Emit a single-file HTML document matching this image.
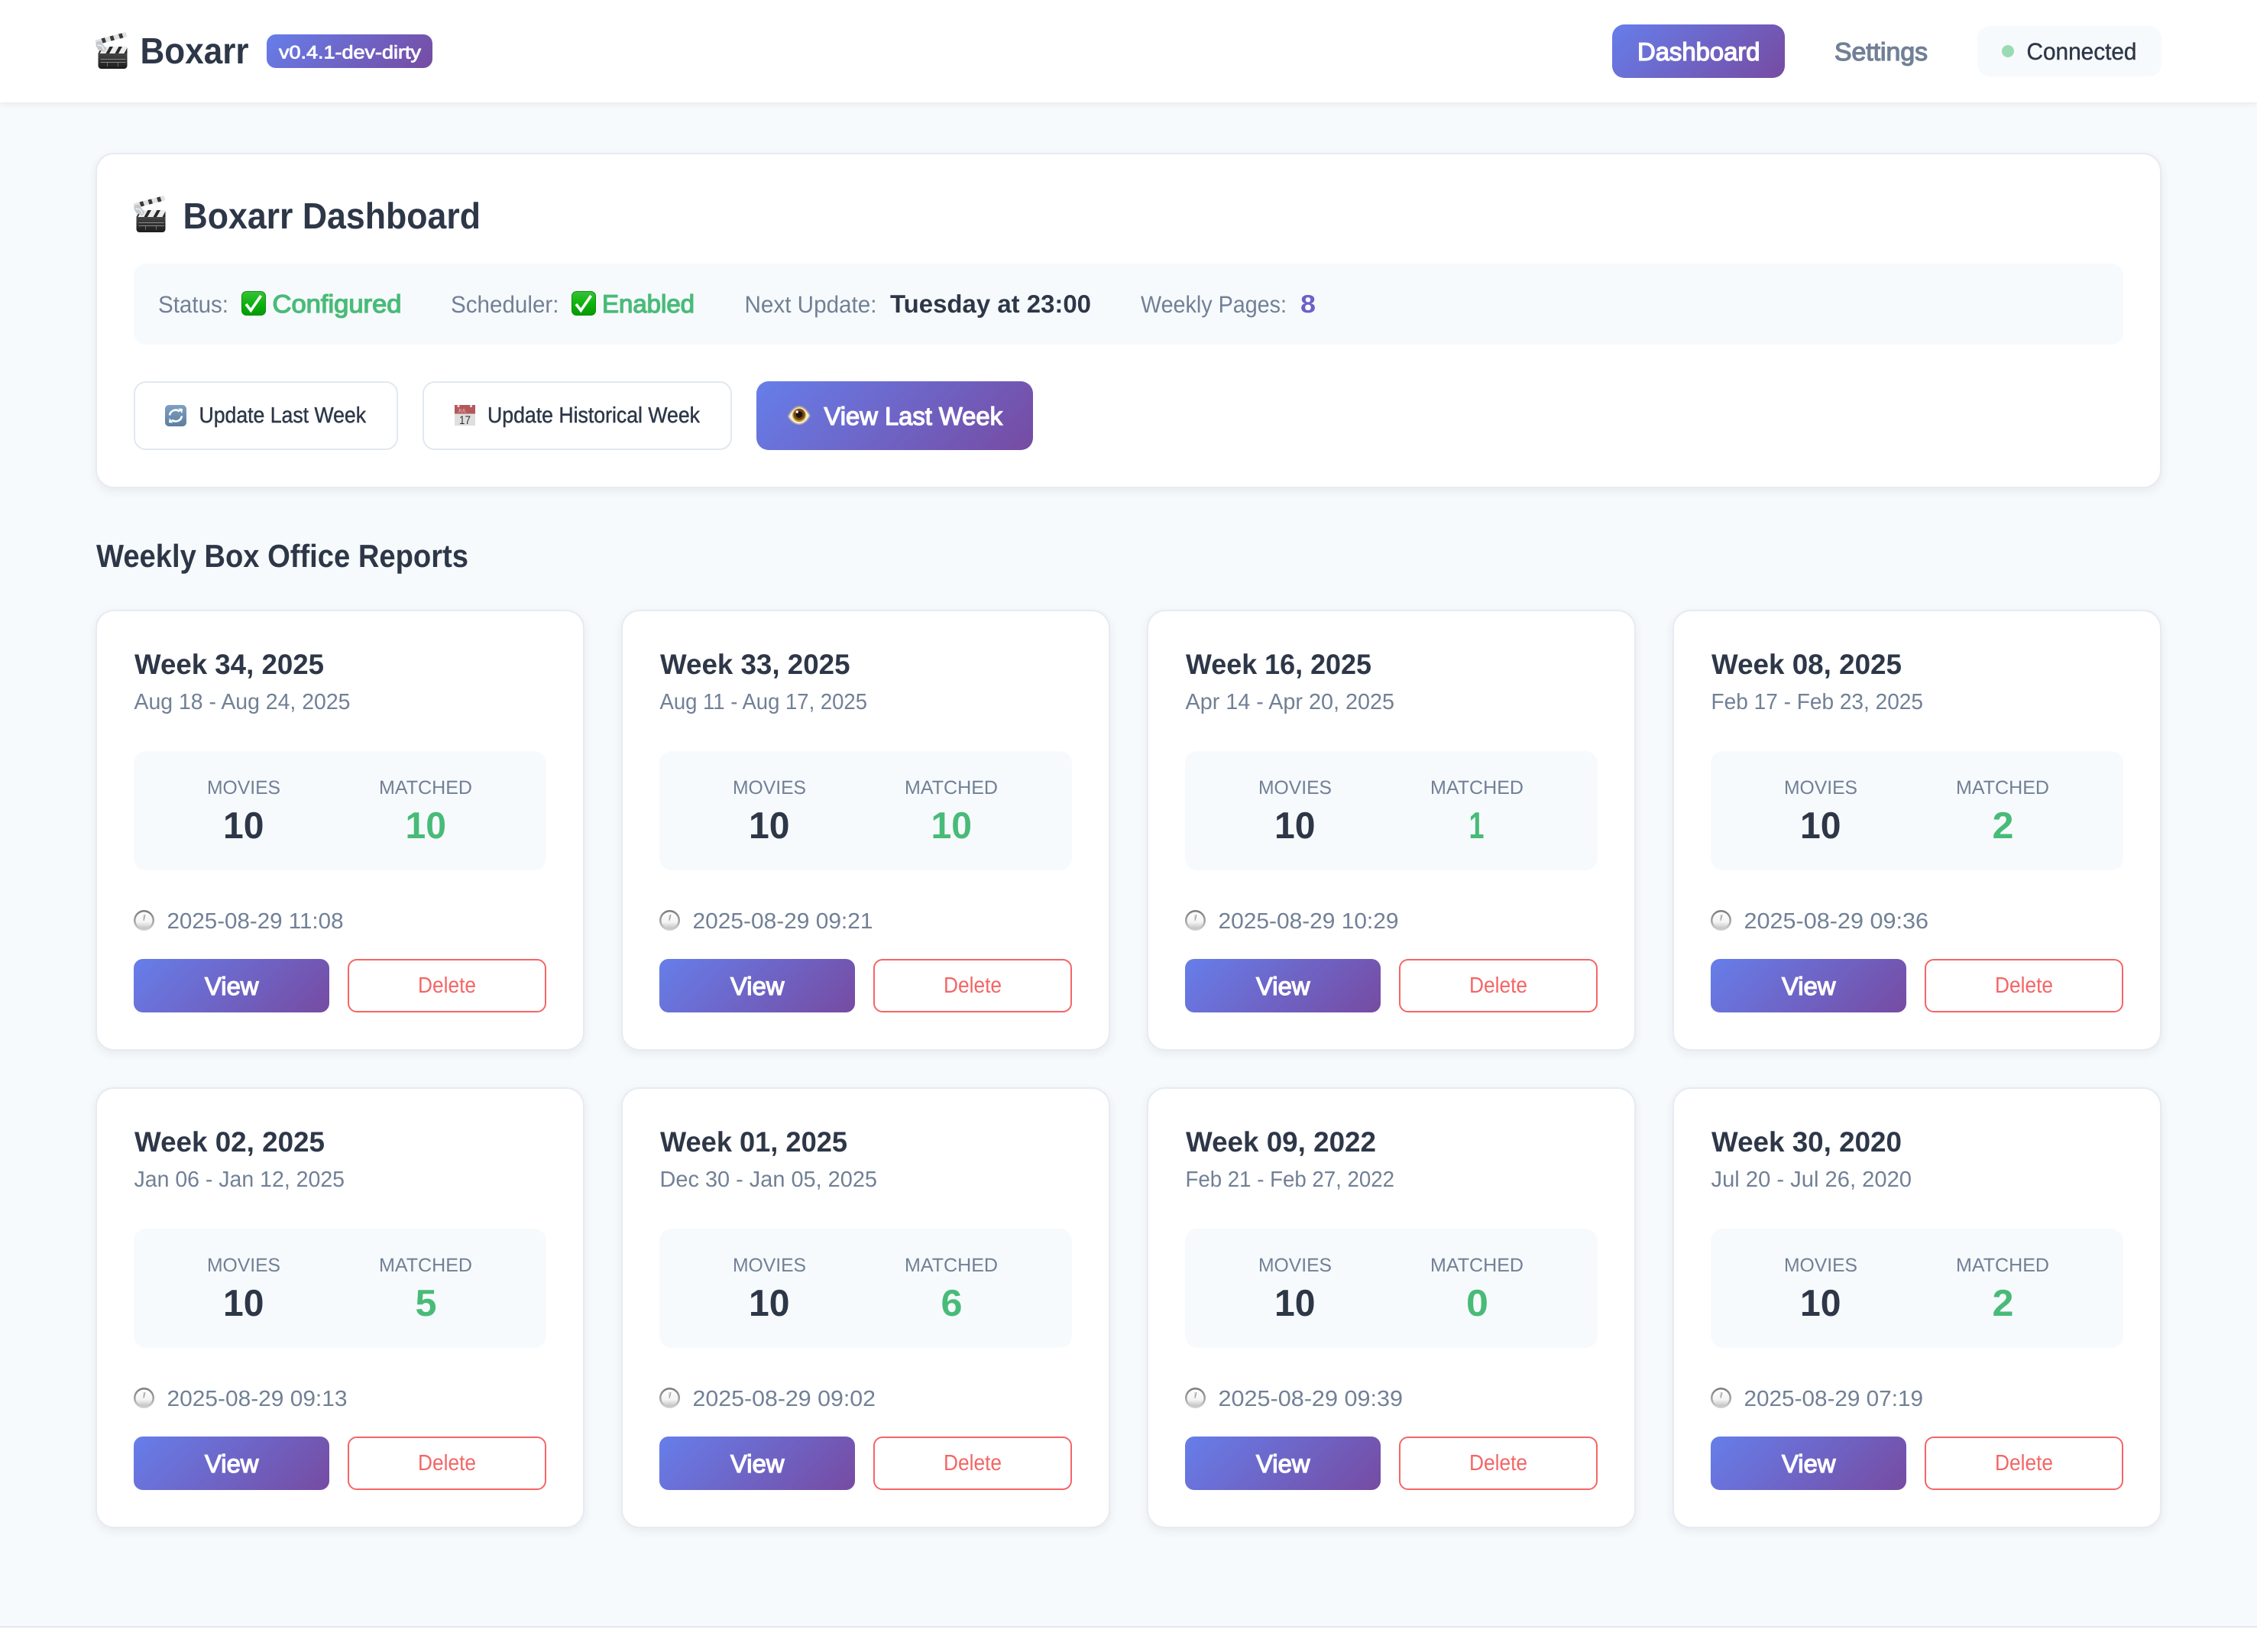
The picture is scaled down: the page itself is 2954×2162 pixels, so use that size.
<!DOCTYPE html>
<html lang="en"><head><meta charset="utf-8"><title>Boxarr Dashboard</title>
<style>
*{box-sizing:border-box;margin:0;padding:0}
html,body{width:2954px;height:2162px;overflow:hidden;background:#f7fafc}
body{position:relative;font-family:"Liberation Sans",sans-serif}
.abs,.card,.card>div{position:absolute}
.grad{background:linear-gradient(135deg,#667eea,#764ba2)}
.header{left:0;top:0;width:2954px;height:134px;background:#fff;box-shadow:0 2px 8px rgba(0,0,0,.08)}
.box{background:#fff;border:2px solid #e6ebf2;box-shadow:0 4px 12px rgba(45,55,72,.08)}
.card{width:640px;height:577px;background:#fff;border:2px solid #e6ebf2;border-radius:24px;box-shadow:0 4px 12px rgba(45,55,72,.08)}
.stats{left:48px;top:183px;width:540px;height:156px;background:#f7fafc;border-radius:16px}
.view{left:48px;top:455px;width:256px;height:70px;border-radius:12px;background:linear-gradient(135deg,#667eea,#764ba2)}
.del{left:328px;top:455px;width:260px;height:70px;border-radius:12px;background:#fff;border:2px solid #f56565}
svg.ov{position:absolute;left:0;top:0;width:2954px;height:2162px;font-family:"Liberation Sans",sans-serif;text-rendering:geometricPrecision}
.d{fill:#2d3748}.g{fill:#718096}.w{fill:#fff}.ok{fill:#48bb78}
.b{font-weight:700}
.m{stroke-width:.45px;paint-order:stroke}
.s{font-weight:400;stroke-width:1.3px;paint-order:stroke}
.s2{font-weight:400;stroke-width:.8px;paint-order:stroke}
.md{stroke:#2d3748}.mw{stroke:#fff}.mg{stroke:#718096}.mo{stroke:#48bb78}
.t{font-size:37px;font-weight:700;fill:#2d3748}
.dt{font-size:29px;fill:#718096}
.l{font-size:25px;fill:#718096}
.n{font-size:49px;font-weight:700}
.vt{font-size:33px;font-weight:400;fill:#fff;stroke:#fff;stroke-width:1.3px}
.dl{font-size:29px;fill:#f56565}
</style></head><body>

<div class="abs header"></div>
<div class="abs grad" style="left:349px;top:45px;width:217px;height:44px;border-radius:12px"></div>
<div class="abs grad" style="left:2110px;top:32px;width:226px;height:70px;border-radius:16px"></div>
<div class="abs" style="left:2588px;top:34px;width:241px;height:66px;border-radius:16px;background:#f7fafc"></div>
<div class="abs" style="left:2620px;top:59px;width:16px;height:16px;border-radius:50%;background:#9adbb4"></div>

<div class="abs box" style="left:125px;top:200px;width:2704px;height:439px;border-radius:24px"></div>
<div class="abs" style="left:175px;top:345px;width:2604px;height:106px;border-radius:16px;background:#f7fafc"></div>
<div class="abs" style="left:175px;top:499px;width:346px;height:90px;border-radius:16px;background:#fff;border:2px solid #e2e8f0"></div>
<div class="abs" style="left:553px;top:499px;width:405px;height:90px;border-radius:16px;background:#fff;border:2px solid #e2e8f0"></div>
<div class="abs grad" style="left:990px;top:499px;width:362px;height:90px;border-radius:16px"></div>

<div class="card" style="left:125px;top:798px"><div class="stats"></div><div class="view"></div><div class="del"></div></div>
<div class="card" style="left:813px;top:798px"><div class="stats"></div><div class="view"></div><div class="del"></div></div>
<div class="card" style="left:1501px;top:798px"><div class="stats"></div><div class="view"></div><div class="del"></div></div>
<div class="card" style="left:2189px;top:798px"><div class="stats"></div><div class="view"></div><div class="del"></div></div>
<div class="card" style="left:125px;top:1423px"><div class="stats"></div><div class="view"></div><div class="del"></div></div>
<div class="card" style="left:813px;top:1423px"><div class="stats"></div><div class="view"></div><div class="del"></div></div>
<div class="card" style="left:1501px;top:1423px"><div class="stats"></div><div class="view"></div><div class="del"></div></div>
<div class="card" style="left:2189px;top:1423px"><div class="stats"></div><div class="view"></div><div class="del"></div></div>

<div class="abs" style="left:0;top:2128px;width:2954px;height:34px;background:#fff;border-top:2px solid #e2e8f0"></div>

<svg class="ov" viewBox="0 0 2954 2162" xmlns="http://www.w3.org/2000/svg">
<defs>
<linearGradient id="gg" x1="0" y1="0" x2="0" y2="1"><stop offset="0" stop-color="#38c238"/><stop offset=".5" stop-color="#0fb30f"/><stop offset="1" stop-color="#059a05"/></linearGradient>
<linearGradient id="bg" x1="0" y1="0" x2="0" y2="1"><stop offset="0" stop-color="#7fa0c2"/><stop offset="1" stop-color="#5c7f9f"/></linearGradient>
<linearGradient id="sg" x1="0" y1="0" x2="0" y2="1"><stop offset="0" stop-color="#7a7a7a"/><stop offset=".6" stop-color="#a8a8a8"/><stop offset="1" stop-color="#d4d4d4"/></linearGradient>
<linearGradient id="fg" x1="0" y1="0" x2="0" y2="1"><stop offset="0" stop-color="#fff"/><stop offset=".6" stop-color="#f4f4f4"/><stop offset="1" stop-color="#c2c2c2"/></linearGradient>
<linearGradient id="cb" x1="0" y1="0" x2="0" y2="1"><stop offset="0" stop-color="#444"/><stop offset="1" stop-color="#1c1c1c"/></linearGradient>

<symbol id="clap" viewBox="0 0 47 48">
<path d="M4 28h38v16a4 4 0 0 1-4 4H8a4 4 0 0 1-4-4z" fill="url(#cb)"/>
<path d="M7 35.500h33M7 39.500h33" stroke="#8a8a8a" stroke-width=".9"/>
<path d="M16 40v5M30 40v5" stroke="#777" stroke-width=".9"/>
<rect x="4" y="19" width="38" height="9" fill="#ececec"/>
<path d="M4 28l5-9h2l-5 9zM14 28l5-9h4.500l-5 9zM26 28l5-9h4.500l-5 9zM38 28l4-7.500V28z" fill="#2a2a2a"/>
<path d="M0 10.500L40 0l2 6L2 16.500z" fill="#e2e2e2"/>
<path d="M8 8.500l4.500-1.200 2 6L10 14.500zM19 5.600l4.500-1.200 2 6L21 11.600zM30.500 2.600L35 1.400l2 6-4.500 1.200z" fill="#3a3a3a"/>
<path d="M1 13l6-1.500L15 22l-3 4-8-3-3-5z" fill="#c4c8cc"/>
<path d="M3 17l6 1 3 6" fill="none" stroke="#f2f2f2" stroke-width="1.400"/>
</symbol>

<symbol id="chk" viewBox="0 0 32 32">
<rect x=".5" y=".5" width="31" height="31" rx="6" fill="url(#gg)" stroke="#0a8f0a"/>
<path d="M6 17l6.300 8.300L25.500 6" fill="none" stroke="#fff" stroke-width="3.600"/>
</symbol>

<symbol id="ref" viewBox="0 0 28 28">
<rect width="28" height="28" rx="5" fill="url(#bg)"/>
<path d="M6 13.500A8 8 0 0 1 19 8.500" fill="none" stroke="#fff" stroke-width="2.600"/>
<path d="M17.500 4.500l5.500.5-.8 6z" fill="#fff"/>
<path d="M22 14.500A8 8 0 0 1 9 19.500" fill="none" stroke="#fff" stroke-width="2.600"/>
<path d="M10.500 23.500L5 23l.8-6z" fill="#fff"/>
</symbol>

<symbol id="cal" viewBox="0 0 27 27">
<rect y="11" width="27" height="16" fill="#dfdfdf"/>
<rect y="0" width="27" height="11.500" fill="#b4585b"/>
<circle cx="5" cy="1.500" r="1.500" fill="#f3e4e4"/><circle cx="21.500" cy="1.500" r="1.500" fill="#f3e4e4"/>
<text x="4" y="9.500" font-size="6.500" fill="#e9c9c9" font-family="Liberation Sans">JUL</text>
<text x="6" y="25" font-size="15.500" fill="#333" font-family="Liberation Sans" textLength="15" lengthAdjust="spacingAndGlyphs">17</text>
</symbol>

<symbol id="eye" viewBox="0 0 32 25">
<path d="M.5 14C4 6 10 0 16 0c6 0 12 6 15 13C28 20 22 25 16 25 10 25 4 21 .5 14z" fill="#a9a298"/>
<path d="M2.500 14C6 7 11 2 16 2s10.500 5 13 11C26.500 19 21 23.500 16 23.500 11 23.500 6 20 2.500 14z" fill="#efebe6"/>
<circle cx="16" cy="12.300" r="8.800" fill="#c9930f"/>
<circle cx="16" cy="11.500" r="7.300" fill="#70431a"/>
<circle cx="16" cy="11.500" r="4.300" fill="#1c120a"/>
<circle cx="13.200" cy="8" r="1.700" fill="#fff"/>
</symbol>

<symbol id="clk" viewBox="0 0 27 27">
<circle cx="13.500" cy="13.500" r="13.500" fill="url(#sg)"/>
<circle cx="13.500" cy="13.500" r="11" fill="url(#fg)"/>
<path d="M13 14l2-8" stroke="#888" stroke-width=".9" fill="none"/>
<path d="M13 14V6" stroke="#aaa" stroke-width=".7" fill="none"/>
</symbol>
</defs>

<!-- header -->
<use href="#clap" x="124.500" y="42" width="47" height="48"/>
<text x="183.500" y="83" font-size="48" textLength="142" lengthAdjust="spacingAndGlyphs" class="d b">Boxarr</text>
<text x="365" y="76.500" font-size="24" textLength="186" lengthAdjust="spacingAndGlyphs" class="w s2 mw">v0.4.1-dev-dirty</text>
<text x="2143" y="79" font-size="33" textLength="160.500" lengthAdjust="spacingAndGlyphs" class="w s mw">Dashboard</text>
<text x="2401" y="79" font-size="33" textLength="122" lengthAdjust="spacingAndGlyphs" class="g s mg">Settings</text>
<text x="2652.500" y="78" font-size="31" textLength="144" lengthAdjust="spacingAndGlyphs" class="d m md">Connected</text>

<!-- dashboard panel -->
<use href="#clap" x="174.500" y="256" width="47" height="48"/>
<text x="239.500" y="299" font-size="48" textLength="389.500" lengthAdjust="spacingAndGlyphs" class="d b">Boxarr Dashboard</text>

<text x="207" y="409" font-size="31" textLength="92" lengthAdjust="spacingAndGlyphs" class="g">Status:</text>
<use href="#chk" x="316" y="381" width="32" height="32"/>
<text x="356.500" y="409" font-size="33" textLength="169" lengthAdjust="spacingAndGlyphs" class="ok s mo">Configured</text>
<text x="590" y="409" font-size="31" textLength="141.500" lengthAdjust="spacingAndGlyphs" class="g">Scheduler:</text>
<use href="#chk" x="748" y="381" width="32" height="32"/>
<text x="788" y="409" font-size="33" textLength="121" lengthAdjust="spacingAndGlyphs" class="ok s mo">Enabled</text>
<text x="974.500" y="409" font-size="31" textLength="173" lengthAdjust="spacingAndGlyphs" class="g">Next Update:</text>
<text x="1165" y="409" font-size="33" textLength="263" lengthAdjust="spacingAndGlyphs" class="d b">Tuesday at 23:00</text>
<text x="1493" y="409" font-size="31" textLength="191" lengthAdjust="spacingAndGlyphs" class="g">Weekly Pages:</text>
<text x="1702" y="409" font-size="33" textLength="20" lengthAdjust="spacingAndGlyphs" fill="#6c60c6" class="b">8</text>

<use href="#ref" x="216" y="530" width="28" height="28"/>
<text x="260.500" y="553" font-size="29" textLength="218.500" lengthAdjust="spacingAndGlyphs" class="d m md">Update Last Week</text>
<use href="#cal" x="595" y="530" width="27" height="27"/>
<text x="638" y="553" font-size="29" textLength="278" lengthAdjust="spacingAndGlyphs" class="d m md">Update Historical Week</text>
<use href="#eye" x="1030" y="531" width="32" height="25"/>
<text x="1078.500" y="556" font-size="33" textLength="233.500" lengthAdjust="spacingAndGlyphs" class="w s mw">View Last Week</text>

<text x="126" y="742" font-size="42" textLength="487" lengthAdjust="spacingAndGlyphs" class="d b">Weekly Box Office Reports</text>

<!-- card 1 -->
<g transform="translate(0,0)">
<text x="176" y="882" class="t" textLength="248" lengthAdjust="spacingAndGlyphs">Week 34, 2025</text>
<text x="175.500" y="928" class="dt" textLength="283" lengthAdjust="spacingAndGlyphs">Aug 18 - Aug 24, 2025</text>
<text x="271" y="1039" class="l" textLength="96" lengthAdjust="spacingAndGlyphs">MOVIES</text>
<text x="496" y="1039" class="l" textLength="122" lengthAdjust="spacingAndGlyphs">MATCHED</text>
<text x="292" y="1097" class="n d" textLength="53.500" lengthAdjust="spacingAndGlyphs">10</text>
<text x="530.500" y="1097" class="n ok" textLength="53.500" lengthAdjust="spacingAndGlyphs">10</text>
<use href="#clk" x="175" y="1191" width="27" height="27"/>
<text x="218.500" y="1215" class="dt" textLength="231" lengthAdjust="spacingAndGlyphs">2025-08-29 11:08</text>
<text x="268" y="1302" class="vt" textLength="70.500" lengthAdjust="spacingAndGlyphs">View</text>
<text x="547" y="1299" class="dl" textLength="76" lengthAdjust="spacingAndGlyphs">Delete</text>
</g>
<!-- card 2 -->
<g transform="translate(688,0)">
<text x="176" y="882" class="t" textLength="248.500" lengthAdjust="spacingAndGlyphs">Week 33, 2025</text>
<text x="175.500" y="928" class="dt" textLength="271.500" lengthAdjust="spacingAndGlyphs">Aug 11 - Aug 17, 2025</text>
<text x="271" y="1039" class="l" textLength="96" lengthAdjust="spacingAndGlyphs">MOVIES</text>
<text x="496" y="1039" class="l" textLength="122" lengthAdjust="spacingAndGlyphs">MATCHED</text>
<text x="292" y="1097" class="n d" textLength="53.500" lengthAdjust="spacingAndGlyphs">10</text>
<text x="530.500" y="1097" class="n ok" textLength="53.500" lengthAdjust="spacingAndGlyphs">10</text>
<use href="#clk" x="175" y="1191" width="27" height="27"/>
<text x="218.500" y="1215" class="dt" textLength="236" lengthAdjust="spacingAndGlyphs">2025-08-29 09:21</text>
<text x="268" y="1302" class="vt" textLength="70.500" lengthAdjust="spacingAndGlyphs">View</text>
<text x="547" y="1299" class="dl" textLength="76" lengthAdjust="spacingAndGlyphs">Delete</text>
</g>
<!-- card 3 -->
<g transform="translate(1376,0)">
<text x="176" y="882" class="t" textLength="243" lengthAdjust="spacingAndGlyphs">Week 16, 2025</text>
<text x="175.500" y="928" class="dt" textLength="273.500" lengthAdjust="spacingAndGlyphs">Apr 14 - Apr 20, 2025</text>
<text x="271" y="1039" class="l" textLength="96" lengthAdjust="spacingAndGlyphs">MOVIES</text>
<text x="496" y="1039" class="l" textLength="122" lengthAdjust="spacingAndGlyphs">MATCHED</text>
<text x="292" y="1097" class="n d" textLength="53.500" lengthAdjust="spacingAndGlyphs">10</text>
<text x="546.500" y="1097" class="n ok" textLength="20" lengthAdjust="spacingAndGlyphs">1</text>
<use href="#clk" x="175" y="1191" width="27" height="27"/>
<text x="218.500" y="1215" class="dt" textLength="236" lengthAdjust="spacingAndGlyphs">2025-08-29 10:29</text>
<text x="268" y="1302" class="vt" textLength="70.500" lengthAdjust="spacingAndGlyphs">View</text>
<text x="547" y="1299" class="dl" textLength="76" lengthAdjust="spacingAndGlyphs">Delete</text>
</g>
<!-- card 4 -->
<g transform="translate(2064,0)">
<text x="176" y="882" class="t" textLength="249" lengthAdjust="spacingAndGlyphs">Week 08, 2025</text>
<text x="175.500" y="928" class="dt" textLength="277.500" lengthAdjust="spacingAndGlyphs">Feb 17 - Feb 23, 2025</text>
<text x="271" y="1039" class="l" textLength="96" lengthAdjust="spacingAndGlyphs">MOVIES</text>
<text x="496" y="1039" class="l" textLength="122" lengthAdjust="spacingAndGlyphs">MATCHED</text>
<text x="292" y="1097" class="n d" textLength="53.500" lengthAdjust="spacingAndGlyphs">10</text>
<text x="543.500" y="1097" class="n ok" textLength="28" lengthAdjust="spacingAndGlyphs">2</text>
<use href="#clk" x="175" y="1191" width="27" height="27"/>
<text x="218.500" y="1215" class="dt" textLength="241.500" lengthAdjust="spacingAndGlyphs">2025-08-29 09:36</text>
<text x="268" y="1302" class="vt" textLength="70.500" lengthAdjust="spacingAndGlyphs">View</text>
<text x="547" y="1299" class="dl" textLength="76" lengthAdjust="spacingAndGlyphs">Delete</text>
</g>
<!-- card 5 -->
<g transform="translate(0,625)">
<text x="176" y="882" class="t" textLength="249" lengthAdjust="spacingAndGlyphs">Week 02, 2025</text>
<text x="175.500" y="928" class="dt" textLength="275.500" lengthAdjust="spacingAndGlyphs">Jan 06 - Jan 12, 2025</text>
<text x="271" y="1039" class="l" textLength="96" lengthAdjust="spacingAndGlyphs">MOVIES</text>
<text x="496" y="1039" class="l" textLength="122" lengthAdjust="spacingAndGlyphs">MATCHED</text>
<text x="292" y="1097" class="n d" textLength="53.500" lengthAdjust="spacingAndGlyphs">10</text>
<text x="543.500" y="1097" class="n ok" textLength="28" lengthAdjust="spacingAndGlyphs">5</text>
<use href="#clk" x="175" y="1191" width="27" height="27"/>
<text x="218.500" y="1215" class="dt" textLength="236" lengthAdjust="spacingAndGlyphs">2025-08-29 09:13</text>
<text x="268" y="1302" class="vt" textLength="70.500" lengthAdjust="spacingAndGlyphs">View</text>
<text x="547" y="1299" class="dl" textLength="76" lengthAdjust="spacingAndGlyphs">Delete</text>
</g>
<!-- card 6 -->
<g transform="translate(688,625)">
<text x="176" y="882" class="t" textLength="245" lengthAdjust="spacingAndGlyphs">Week 01, 2025</text>
<text x="175.500" y="928" class="dt" textLength="284.500" lengthAdjust="spacingAndGlyphs">Dec 30 - Jan 05, 2025</text>
<text x="271" y="1039" class="l" textLength="96" lengthAdjust="spacingAndGlyphs">MOVIES</text>
<text x="496" y="1039" class="l" textLength="122" lengthAdjust="spacingAndGlyphs">MATCHED</text>
<text x="292" y="1097" class="n d" textLength="53.500" lengthAdjust="spacingAndGlyphs">10</text>
<text x="543.500" y="1097" class="n ok" textLength="28" lengthAdjust="spacingAndGlyphs">6</text>
<use href="#clk" x="175" y="1191" width="27" height="27"/>
<text x="218.500" y="1215" class="dt" textLength="239.500" lengthAdjust="spacingAndGlyphs">2025-08-29 09:02</text>
<text x="268" y="1302" class="vt" textLength="70.500" lengthAdjust="spacingAndGlyphs">View</text>
<text x="547" y="1299" class="dl" textLength="76" lengthAdjust="spacingAndGlyphs">Delete</text>
</g>
<!-- card 7 -->
<g transform="translate(1376,625)">
<text x="176" y="882" class="t" textLength="249" lengthAdjust="spacingAndGlyphs">Week 09, 2022</text>
<text x="175.500" y="928" class="dt" textLength="273.500" lengthAdjust="spacingAndGlyphs">Feb 21 - Feb 27, 2022</text>
<text x="271" y="1039" class="l" textLength="96" lengthAdjust="spacingAndGlyphs">MOVIES</text>
<text x="496" y="1039" class="l" textLength="122" lengthAdjust="spacingAndGlyphs">MATCHED</text>
<text x="292" y="1097" class="n d" textLength="53.500" lengthAdjust="spacingAndGlyphs">10</text>
<text x="543" y="1097" class="n ok" textLength="29" lengthAdjust="spacingAndGlyphs">0</text>
<use href="#clk" x="175" y="1191" width="27" height="27"/>
<text x="218.500" y="1215" class="dt" textLength="241.500" lengthAdjust="spacingAndGlyphs">2025-08-29 09:39</text>
<text x="268" y="1302" class="vt" textLength="70.500" lengthAdjust="spacingAndGlyphs">View</text>
<text x="547" y="1299" class="dl" textLength="76" lengthAdjust="spacingAndGlyphs">Delete</text>
</g>
<!-- card 8 -->
<g transform="translate(2064,625)">
<text x="176" y="882" class="t" textLength="249" lengthAdjust="spacingAndGlyphs">Week 30, 2020</text>
<text x="175.500" y="928" class="dt" textLength="262.500" lengthAdjust="spacingAndGlyphs">Jul 20 - Jul 26, 2020</text>
<text x="271" y="1039" class="l" textLength="96" lengthAdjust="spacingAndGlyphs">MOVIES</text>
<text x="496" y="1039" class="l" textLength="122" lengthAdjust="spacingAndGlyphs">MATCHED</text>
<text x="292" y="1097" class="n d" textLength="53.500" lengthAdjust="spacingAndGlyphs">10</text>
<text x="543.500" y="1097" class="n ok" textLength="28" lengthAdjust="spacingAndGlyphs">2</text>
<use href="#clk" x="175" y="1191" width="27" height="27"/>
<text x="218.500" y="1215" class="dt" textLength="234.500" lengthAdjust="spacingAndGlyphs">2025-08-29 07:19</text>
<text x="268" y="1302" class="vt" textLength="70.500" lengthAdjust="spacingAndGlyphs">View</text>
<text x="547" y="1299" class="dl" textLength="76" lengthAdjust="spacingAndGlyphs">Delete</text>
</g>
</svg>
</body></html>
